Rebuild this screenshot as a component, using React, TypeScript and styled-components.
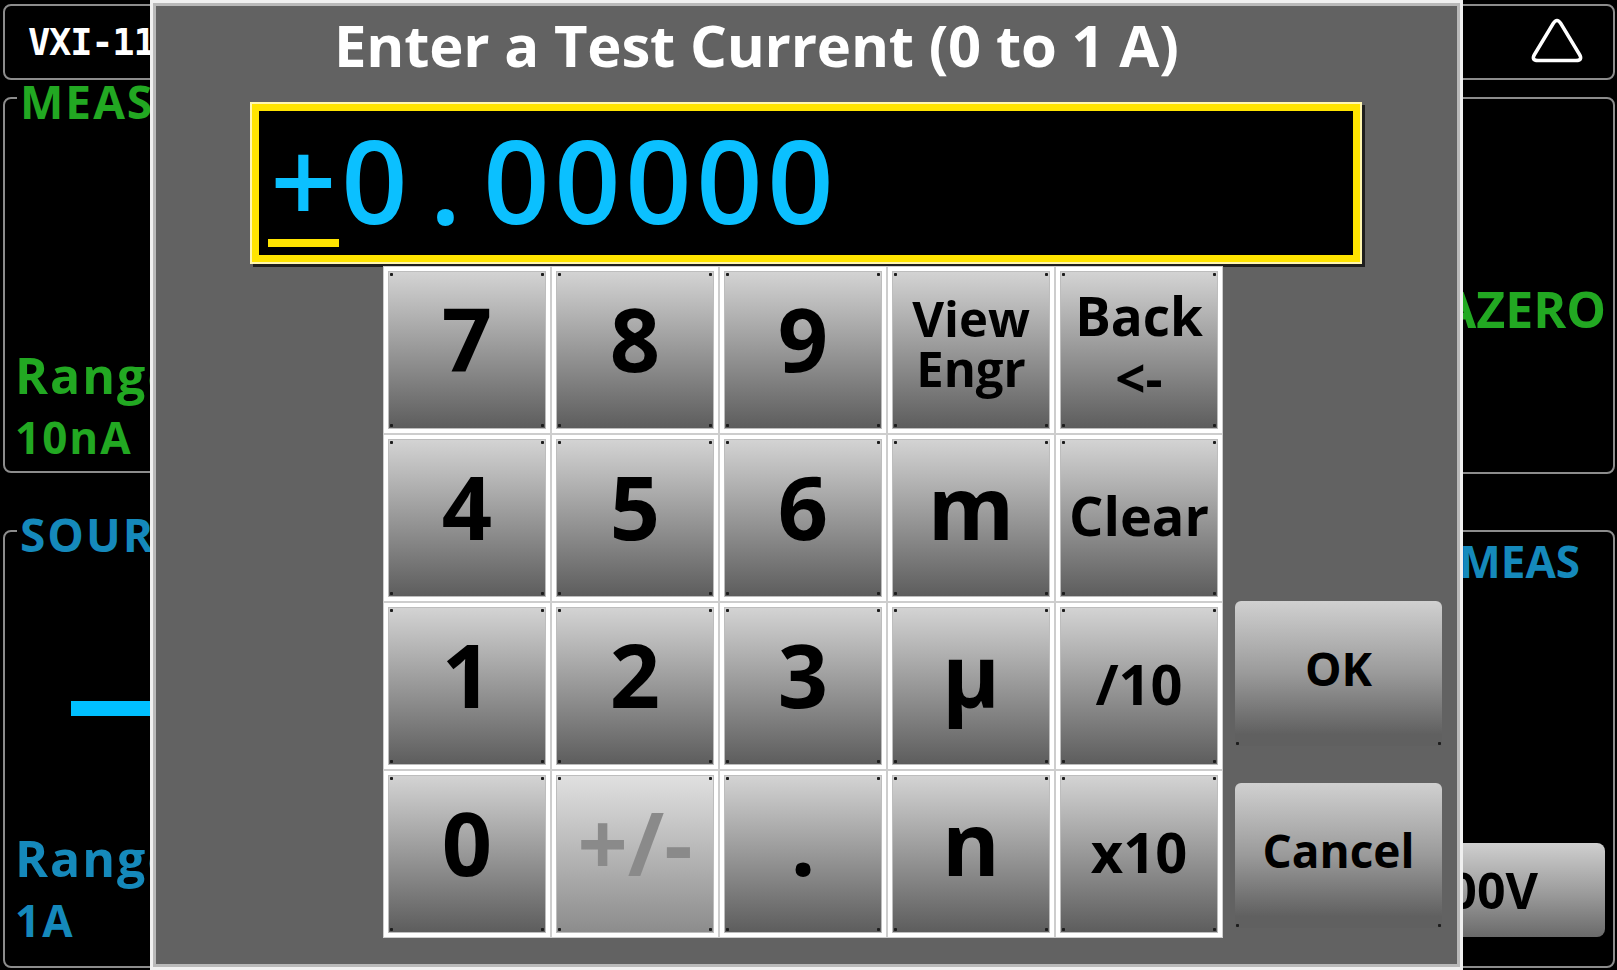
import styled, { createGlobalStyle } from 'styled-components';

const GlobalStyle = createGlobalStyle`
  html, body {
    margin: 0;
    padding: 0;
    background: #000;
  }
  body {
    font-family: 'Open Sans', 'Noto Sans', sans-serif;
  }
`;

const GREEN = '#22a822';
const BLUE = '#1589bb';
const YELLOW = '#ffe400';

// tiny dark specks that sit in the corners of every key face
const dot = (pos: string) =>
  `radial-gradient(circle, #1c1c1c 0 1.3px, transparent 1.9px) ${pos} / 5px 5px no-repeat`;
const allDots = [dot('left 0 top 0'), dot('right 0 top 0'), dot('left 0 bottom 0'), dot('right 0 bottom 0')].join(', ');
const bottomDots = [dot('left 0 bottom 0'), dot('right 0 bottom 0')].join(', ');

const Screen = styled.div`
  position: relative;
  width: 1617px;
  height: 970px;
  overflow: hidden;
  background: #000;
  font-family: 'Open Sans', 'Noto Sans', sans-serif;
  font-weight: 700;
`;

const Backdrop = styled.div`
  display: grid;
  grid-template-columns: 1fr 180px;
  column-gap: 12px;
  height: 100%;
  box-sizing: border-box;
  padding: 4px 2px 2px 3px;
`;

const Column = styled.div`
  display: flex;
  flex-direction: column;
  min-width: 0;
`;

const Tile = styled.div<{ $end?: boolean }>`
  height: 76px;
  box-sizing: border-box;
  border: 2px solid #8c8c8c;
  border-radius: 8px;
  display: flex;
  align-items: center;
  justify-content: ${p => (p.$end ? 'flex-end' : 'flex-start')};
  padding: ${p => (p.$end ? '0 29px 5px 0' : '0 0 0 23px')};
`;

const TileText = styled.span`
  font-family: 'DejaVu Sans Mono', 'Liberation Mono', monospace;
  font-size: 37px;
  letter-spacing: -1.2px;
  color: #fff;
  white-space: nowrap;
`;

const Panel = styled.div<{ $top: number; $height?: number; $pad?: string }>`
  margin-top: ${p => p.$top}px;
  ${p => (p.$height ? `height: ${p.$height}px;` : 'flex: 1;')}
  box-sizing: border-box;
  border: 2px solid #8c8c8c;
  border-radius: 8px;
  display: flex;
  flex-direction: column;
  padding: ${p => p.$pad ?? '0'};
  min-height: 0;
`;

const Legend = styled.div<{ $color: string }>`
  align-self: flex-start;
  margin: -18px 0 0 2px;
  padding: 0 3px;
  background: #000;
  color: ${p => p.$color};
  font-size: 46px;
  line-height: 40px;
  letter-spacing: 2px;
  white-space: nowrap;
`;

const RangeBlock = styled.div<{ $color: string }>`
  margin-top: auto;
  color: ${p => p.$color};
  letter-spacing: 2px;
  white-space: nowrap;
`;

const RangeName = styled.div`
  font-size: 50px;
  line-height: 50px;
`;

const RangeValue = styled.div`
  margin-top: 15px;
  font-size: 44px;
  line-height: 44px;
`;

const SourceBar = styled.div`
  margin: 147px 0 0 56px;
  width: 320px;
  height: 15px;
  background: #00bfff;
`;

const SideText = styled.div<{ $color: string; $size: number; $mt: number; $mr: number }>`
  align-self: flex-end;
  margin: ${p => p.$mt}px ${p => p.$mr}px 0 0;
  color: ${p => p.$color};
  font-size: ${p => p.$size}px;
  line-height: ${p => p.$size}px;
  white-space: nowrap;
`;

const RangeButton = styled.div`
  align-self: flex-end;
  margin: auto 8px 29px 0;
  width: 168px;
  height: 94px;
  box-sizing: border-box;
  border-radius: 8px;
  background: linear-gradient(#cfcfcf, #9a9a9a 55%, #6a6a6a);
  display: flex;
  align-items: center;
  justify-content: flex-end;
  padding-right: 67px;
  font-size: 50px;
  color: #000;
  white-space: nowrap;
`;

const Dialog = styled.div`
  position: absolute;
  left: 150px;
  top: 0;
  width: 1313px;
  height: 970px;
  box-sizing: border-box;
  border: 3px solid #f0f0f0;
  box-shadow: inset 0 0 0 3px #b9b9b9;
  padding: 3px;
  background: #626262;
  display: flex;
  flex-direction: column;
`;

const Title = styled.h1`
  margin: 4px 0 0 178px;
  font-size: 58px;
  line-height: 70px;
  font-weight: 700;
  letter-spacing: -0.2px;
  color: #fff;
  white-space: nowrap;
`;

const Entry = styled.div`
  margin: 24px 0 0 96px;
  width: 1108px;
  height: 158px;
  box-sizing: border-box;
  border: 7px solid ${YELLOW};
  background: #000;
  box-shadow: 0 0 0 2px #fff6b0, 3px 3px 0 2px #1e1e1e;
  padding: 10px 0 0 9px;
`;

const Value = styled.div`
  display: flex;
  height: 116px;
  font-weight: 600;
  font-size: 116px;
  line-height: 116px;
  color: #0bc0ff;
`;

const Cell = styled.span`
  display: flex;
  justify-content: center;
  flex: none;
  width: 71px;
`;

const Cursor = styled.div`
  margin-top: 2px;
  width: 71px;
  height: 8px;
  background: ${YELLOW};
`;

const Body = styled.div`
  display: flex;
  margin: 4px 0 0 227px;
`;

const Keypad = styled.div`
  display: grid;
  grid-template-columns: repeat(5, 168px);
  grid-template-rows: repeat(4, 168px);
`;

const KeyCell = styled.div`
  box-sizing: border-box;
  border: 1px solid #cdcdcd;
  background: #fff;
  padding: 4px;
`;

const KeyFace = styled.div<{ $size: number; $lh?: number; $shift: number; $disabled?: boolean }>`
  height: 100%;
  box-sizing: border-box;
  border: 1px solid #bdbdbd;
  background: ${allDots},
    ${p => (p.$disabled ? 'linear-gradient(#e0e0e0, #8c8c8c)' : 'linear-gradient(#d3d3d3, #5d5d5d)')};
  display: flex;
  align-items: center;
  justify-content: center;
  text-align: center;
  padding-bottom: ${p => p.$shift}px;
  font-size: ${p => p.$size}px;
  line-height: ${p => (p.$lh ? `${p.$lh}px` : 'normal')};
  color: ${p => (p.$disabled ? '#8a8a8a' : '#000')};
  white-space: pre-line;
`;

const Side = styled.div`
  display: flex;
  flex-direction: column;
  justify-content: flex-end;
  gap: 37px;
  margin-left: 12px;
  padding-bottom: 10px;
`;

const ActionButton = styled.div`
  width: 207px;
  height: 145px;
  box-sizing: border-box;
  border-radius: 6px 6px 0 0;
  background: ${bottomDots}, linear-gradient(#d0d0d0, #9a9a9a 50%, #606060 92%);
  display: flex;
  align-items: center;
  justify-content: center;
  padding-bottom: 11px;
  font-size: 46px;
  color: #000;
`;

type Key = { label: string; size?: number; lh?: number; shift?: number; disabled?: boolean };

const keys: Key[] = [
  { label: '7' },
  { label: '8' },
  { label: '9' },
  { label: 'View\nEngr', size: 49, lh: 50, shift: 14 },
  { label: 'Back\n<-', size: 53, lh: 62, shift: 7 },
  { label: '4' },
  { label: '5' },
  { label: '6' },
  { label: 'm' },
  { label: 'Clear', size: 54, shift: 7 },
  { label: '1' },
  { label: '2' },
  { label: '3' },
  { label: '\u00b5' },
  { label: '/10', size: 56, shift: 6 },
  { label: '0' },
  { label: '+/-', disabled: true },
  { label: '.' },
  { label: 'n' },
  { label: 'x10', size: 56, shift: 6 },
];

const WarningIcon = () => (
  <svg width="54" height="48" viewBox="0 0 54 48" fill="none" stroke="#fff" strokeWidth="3.5" strokeLinejoin="round">
    <path d="M23.2 7.5 Q27 1.5 30.8 7.5 L49.5 38.5 Q53 44.5 46 44.5 L8 44.5 Q1 44.5 4.5 38.5 Z" />
  </svg>
);

const App = () => {
  const value = '+0.00000';

  return (
    <Screen>
      <GlobalStyle />
      <Backdrop>
        <Column>
          <Tile>
            <TileText>VXI-11</TileText>
          </Tile>
          <Panel $top={17} $height={376} $pad="0 0 12px 10px">
            <Legend $color={GREEN}>MEASURE</Legend>
            <RangeBlock $color={GREEN}>
              <RangeName>Range</RangeName>
              <RangeValue>10nA</RangeValue>
            </RangeBlock>
          </Panel>
          <Panel $top={57} $pad="0 0 24px 10px">
            <Legend $color={BLUE}>SOURCE</Legend>
            <SourceBar />
            <RangeBlock $color={BLUE}>
              <RangeName>Range</RangeName>
              <RangeValue>1A</RangeValue>
            </RangeBlock>
          </Panel>
        </Column>
        <Column>
          <Tile $end>
            <WarningIcon />
          </Tile>
          <Panel $top={17} $height={377}>
            <SideText $color={GREEN} $size={50} $mt={185} $mr={7}>AZERO</SideText>
          </Panel>
          <Panel $top={56}>
            <SideText $color={BLUE} $size={44} $mt={7} $mr={33}>MEAS</SideText>
            <RangeButton>200V</RangeButton>
          </Panel>
        </Column>
      </Backdrop>

      <Dialog>
        <Title>Enter a Test Current (0 to 1 A)</Title>
        <Entry>
          <Value>
            {value.split('').map((ch, i) => (
              <Cell key={i}>{ch}</Cell>
            ))}
          </Value>
          <Cursor />
        </Entry>
        <Body>
          <Keypad>
            {keys.map(k => (
              <KeyCell key={k.label}>
                <KeyFace $size={k.size ?? 88} $lh={k.lh} $shift={k.shift ?? 24} $disabled={k.disabled}>
                  {k.label}
                </KeyFace>
              </KeyCell>
            ))}
          </Keypad>
          <Side>
            <ActionButton>OK</ActionButton>
            <ActionButton>Cancel</ActionButton>
          </Side>
        </Body>
      </Dialog>
    </Screen>
  );
};

export default App;
